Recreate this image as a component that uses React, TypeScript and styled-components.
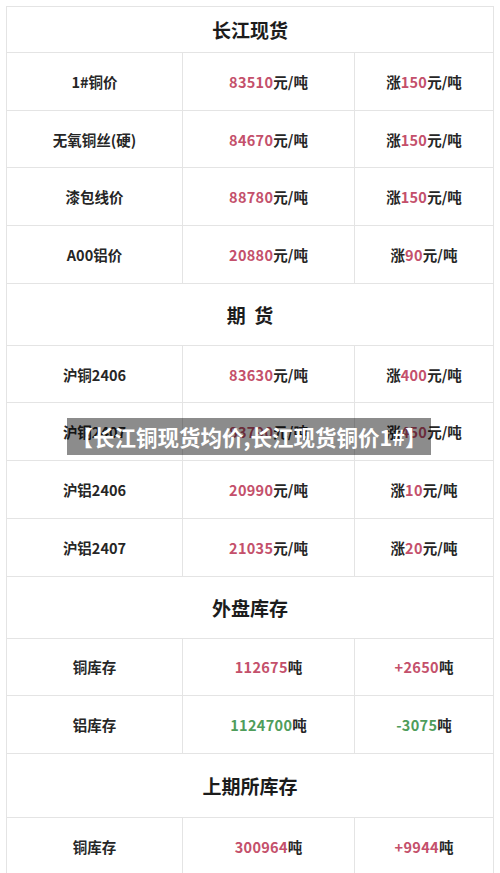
import React from 'react';
import styled, { createGlobalStyle } from 'styled-components';

const GlobalStyle = createGlobalStyle`
  html, body {
    margin: 0;
    padding: 0;
    background: #fff;
  }
  body {
    width: 500px;
    height: 873px;
    overflow: hidden;
    font-family: "Noto Sans CJK SC", "Noto Sans", sans-serif;
  }
`;

const Page = styled.div`
  position: relative;
  width: 500px;
  height: 873px;
  overflow: hidden;
  background: #fff;
`;

const Sheet = styled.div`
  margin: 6px 6px 0 6px;
  border: 1px solid #e4e4e4;
  border-bottom: none;
`;

const TitleRow = styled.div<{ $h: number }>`
  height: ${(p) => p.$h}px;
  display: flex;
  align-items: center;
  justify-content: center;
  border-bottom: 1px solid #e4e4e4;
  box-sizing: border-box;
  font-size: 19px;
  font-weight: 700;
  color: #1c1c1c;
  white-space: pre;
`;

const DataRow = styled.div`
  height: 57.7px;
  display: grid;
  grid-template-columns: 175px 172px 1fr;
  border-bottom: 1px solid #e4e4e4;
  box-sizing: border-box;
`;

const Cell = styled.div`
  display: flex;
  align-items: center;
  justify-content: center;
  font-size: 14.5px;
  font-weight: 700;
  color: #262626;
  & + & {
    border-left: 1px solid #e4e4e4;
  }
`;

const Num = styled.span<{ $tone: 'red' | 'green' }>`
  color: ${(p) => (p.$tone === 'red' ? '#c4506b' : '#4f9d5b')};
  letter-spacing: 0.3px;
`;

const Banner = styled.div`
  position: absolute;
  left: 67px;
  top: 418px;
  width: 364px;
  height: 37px;
  background: rgba(0, 0, 0, 0.45);
  display: flex;
  align-items: center;
  justify-content: center;
  color: #fff;
  font-size: 21.5px;
  font-weight: 700;
  white-space: nowrap;
`;

type Row = {
  label: string;
  value: string;
  valueUnit: string;
  prefix?: string;
  change: string;
  changeUnit: string;
  tone?: 'red' | 'green';
};

const sections: { title: string; h: number; rows: Row[] }[] = [
  {
    title: '长江现货',
    h: 46,
    rows: [
      { label: '1#铜价', value: '83510', valueUnit: '元/吨', prefix: '涨', change: '150', changeUnit: '元/吨' },
      { label: '无氧铜丝(硬)', value: '84670', valueUnit: '元/吨', prefix: '涨', change: '150', changeUnit: '元/吨' },
      { label: '漆包线价', value: '88780', valueUnit: '元/吨', prefix: '涨', change: '150', changeUnit: '元/吨' },
      { label: 'A00铝价', value: '20880', valueUnit: '元/吨', prefix: '涨', change: '90', changeUnit: '元/吨' },
    ],
  },
  {
    title: '期  货',
    h: 62,
    rows: [
      { label: '沪铜2406', value: '83630', valueUnit: '元/吨', prefix: '涨', change: '400', changeUnit: '元/吨' },
      { label: '沪铜2407', value: '83790', valueUnit: '元/吨', prefix: '涨', change: '450', changeUnit: '元/吨' },
      { label: '沪铝2406', value: '20990', valueUnit: '元/吨', prefix: '涨', change: '10', changeUnit: '元/吨' },
      { label: '沪铝2407', value: '21035', valueUnit: '元/吨', prefix: '涨', change: '20', changeUnit: '元/吨' },
    ],
  },
  {
    title: '外盘库存',
    h: 62,
    rows: [
      { label: '铜库存', value: '112675', valueUnit: '吨', change: '+2650', changeUnit: '吨' },
      { label: '铝库存', value: '1124700', valueUnit: '吨', change: '-3075', changeUnit: '吨', tone: 'green' },
    ],
  },
  {
    title: '上期所库存',
    h: 64,
    rows: [
      { label: '铜库存', value: '300964', valueUnit: '吨', change: '+9944', changeUnit: '吨' },
    ],
  },
];

const App: React.FC = () => (
  <Page>
    <GlobalStyle />
    <Sheet>
      {sections.map((s) => (
        <React.Fragment key={s.title}>
          <TitleRow $h={s.h}>{s.title}</TitleRow>
          {s.rows.map((r) => (
            <DataRow key={r.label + r.value}>
              <Cell>{r.label}</Cell>
              <Cell>
                <Num $tone={r.tone ?? 'red'}>{r.value}</Num>
                {r.valueUnit}
              </Cell>
              <Cell>
                {r.prefix}
                <Num $tone={r.tone ?? 'red'}>{r.change}</Num>
                {r.changeUnit}
              </Cell>
            </DataRow>
          ))}
        </React.Fragment>
      ))}
    </Sheet>
    <Banner>【长江铜现货均价,长江现货铜价1#】</Banner>
  </Page>
);

export default App;
